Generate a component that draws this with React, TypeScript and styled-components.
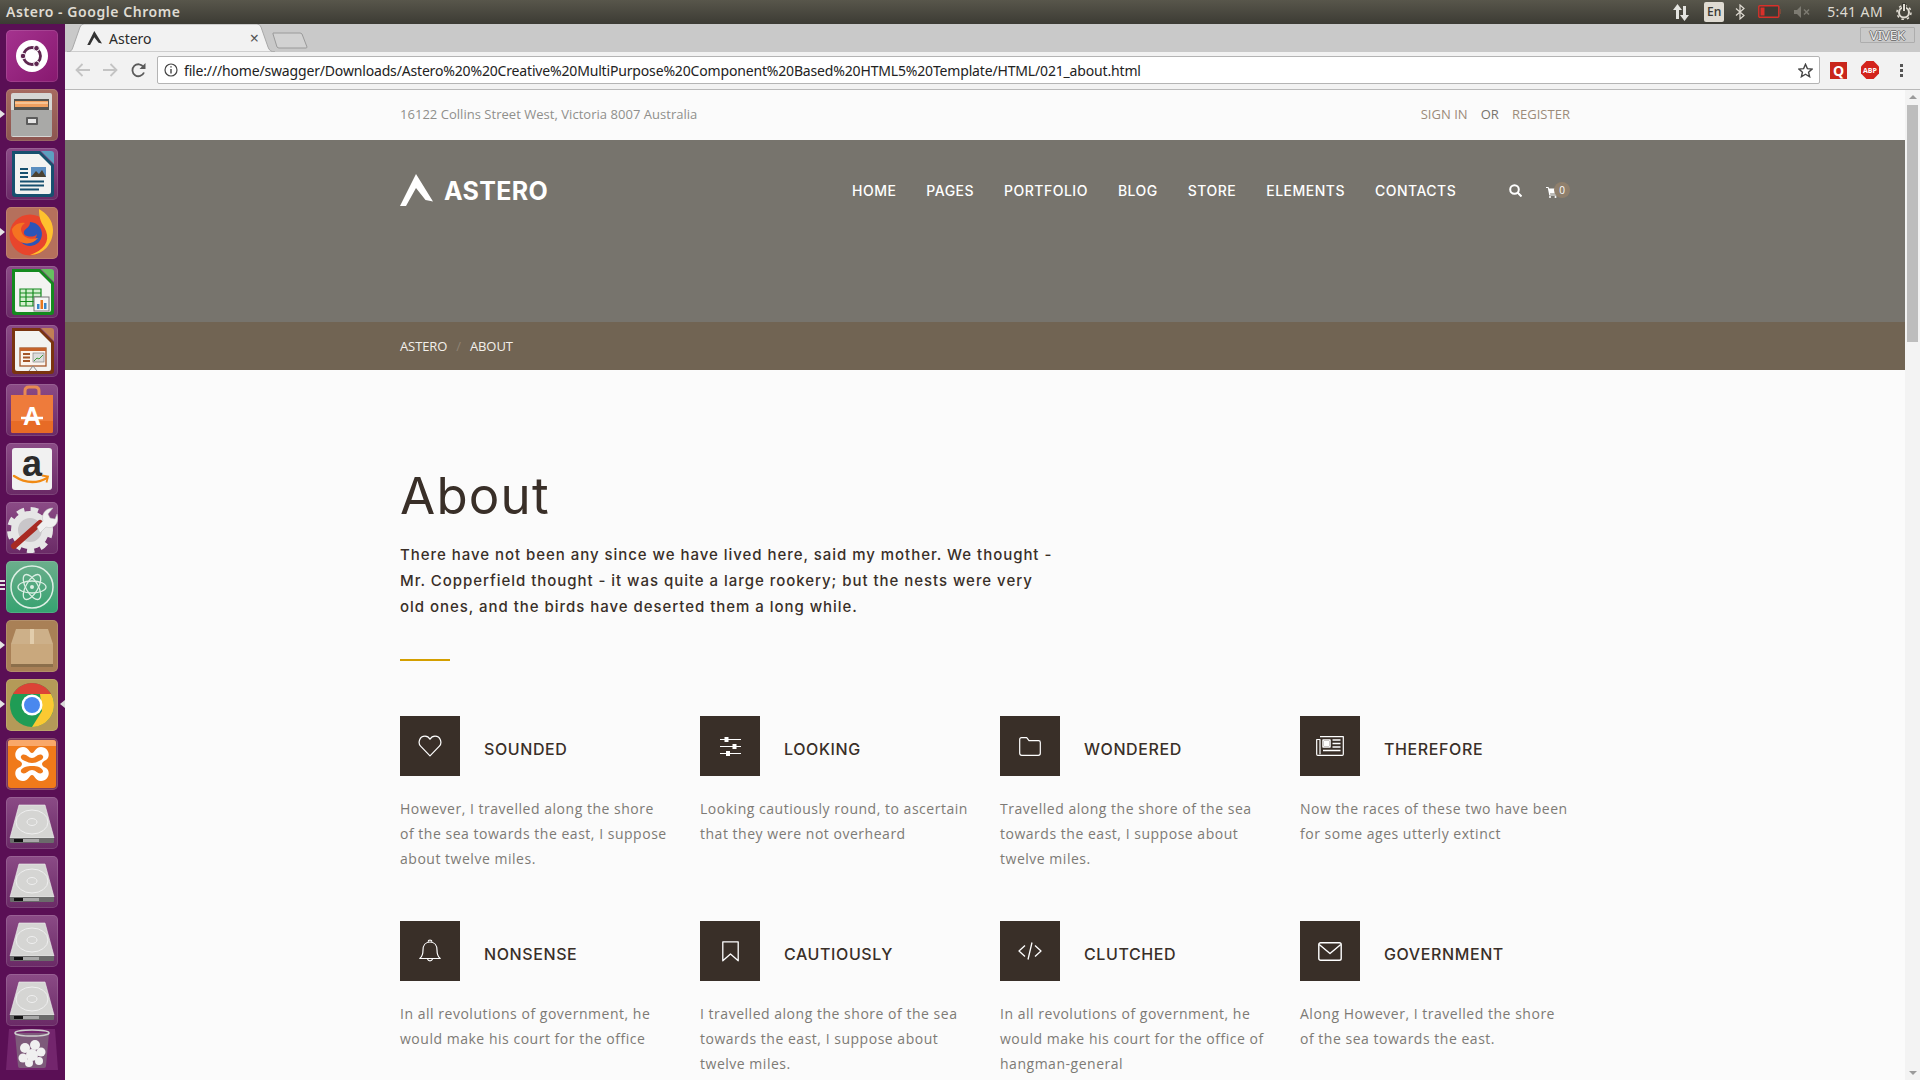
import React from "react";
import styled, { createGlobalStyle } from "styled-components";

const GlobalStyle = createGlobalStyle`
  html, body {
    margin: 0;
    padding: 0;
    width: 1920px;
    height: 1080px;
    overflow: hidden;
    background: #5a0f55;
  }
  * { box-sizing: border-box; }
`;

const Screen = styled.div`
  width: 1920px;
  height: 1080px;
  display: flex;
  flex-direction: column;
  overflow: hidden;
  font-family: "Open Sans", "Liberation Sans", sans-serif;
`;

/* ubuntu top panel */
const Panel = styled.div`
  height: 24px;
  flex: none;
  display: flex;
  align-items: center;
  justify-content: space-between;
  padding: 0 0 1px 6px;
  background: linear-gradient(#58564b, #3c3b34);
`;

const PanelTitle = styled.span`
  font-family: "Noto Sans", sans-serif;
  font-size: 14px;
  font-weight: 600;
  letter-spacing: 0.55px;
  color: #dfdbd2;
`;

const Tray = styled.div`
  display: flex;
  align-items: center;
  height: 24px;
  gap: 13px;
  padding-right: 8px;
`;

const LangBox = styled.span`
  width: 20px;
  height: 20px;
  margin: 0 -2px 0 2px;
  display: flex;
  align-items: center;
  justify-content: center;
  background: #dfdbd2;
  border-radius: 2px;
  color: #3c3b34;
  font-size: 12px;
  font-weight: 600;
`;

const Clock = styled.span`
  font-family: "Noto Sans", sans-serif;
  font-size: 14px;
  letter-spacing: 0.4px;
  color: #dfdbd2;
  margin-left: 2px;
`;

const Desk = styled.div`
  flex: 1;
  display: flex;
  min-height: 0;
`;

/* launcher */
const Launcher = styled.div`
  width: 65px;
  flex: none;
  display: flex;
  flex-direction: column;
  gap: 7px;
  padding: 6px 0 0 6px;
  background: #5a0f55;
  position: relative;
`;

const Tile = styled.div<{ $bg?: string }>`
  width: 52px;
  height: 52px;
  flex: none;
  position: relative;
  border-radius: 5px;
  background: ${(p) => p.$bg || "linear-gradient(#8b4b86, #6a2a66)"};
  box-shadow: inset 0 0 0 1px rgba(255, 255, 255, 0.12);

  svg {
    display: block;
  }
`;

const Pip = styled.span<{ $side?: "left" | "right" }>`
  position: absolute;
  top: 21px;
  ${(p) => (p.$side === "right" ? "right: -7px;" : "left: -6px;")}
  width: 0;
  height: 0;
  border-top: 4px solid transparent;
  border-bottom: 4px solid transparent;
  ${(p) =>
    p.$side === "right"
      ? "border-right: 5px solid #d9d9d9;"
      : "border-left: 5px solid #e4e4e4;"}
`;

const Pips = styled.span`
  position: absolute;
  top: 19px;
  left: -6px;
  width: 5px;
  height: 11px;
  background: repeating-linear-gradient(#e4e4e4 0 2px, transparent 2px 4px);
`;

const Browser = styled.div`
  flex: 1;
  display: flex;
  flex-direction: column;
  min-width: 0;
`;

const TabStrip = styled.div`
  height: 28px;
  flex: none;
  display: flex;
  align-items: flex-end;
  position: relative;
  background: #c9c9c9;
  padding-left: 2px;
`;

const Tab = styled.div`
  width: 208px;
  height: 28px;
  position: relative;
  display: flex;
  align-items: center;
  padding: 0 16px 0 20px;
  color: #2b2b2b;
  font-family: "Noto Sans", sans-serif;
  font-size: 14px;

  > svg {
    position: relative;
  }

  > svg:first-child {
    position: absolute;
    left: 0;
    top: 0;
  }
`;

const TabLabel = styled.span`
  position: relative;
  margin-left: 7px;
  flex: 1;
`;

const TabClose = styled.span`
  position: relative;
  font-size: 16px;
  color: #555;
`;

const NewTab = styled.div`
  margin: 0 0 3px -3px;
  height: 17px;
  svg {
    display: block;
  }
`;

const Profile = styled.span`
  position: absolute;
  right: 5px;
  top: 3px;
  width: 55px;
  height: 16px;
  display: flex;
  align-items: center;
  justify-content: center;
  border: 1px solid #adadad;
  border-radius: 1px;
  font-family: "Noto Sans", sans-serif;
  font-size: 13px;
  color: #ececec;
  text-shadow: 1px 0 0 #777, -1px 0 0 #777, 0 1px 0 #777, 0 -1px 0 #777;
`;

const Toolbar = styled.div`
  height: 38px;
  flex: none;
  display: flex;
  align-items: center;
  background: #f2f2f2;
  border-bottom: 1px solid #b9b9b9;
  padding: 0 0 1px 10px;
`;

const NavIcons = styled.div`
  display: flex;
  align-items: center;
  gap: 13px;
  width: 82px;
  flex: none;
`;

const Omnibox = styled.div`
  width: 1663px;
  height: 28px;
  flex: none;
  display: flex;
  align-items: center;
  gap: 6px;
  padding: 0 6px;
  background: #fff;
  border: 1px solid #b4b4b4;
  border-radius: 2px;
`;

const UrlText = styled.span`
  flex: 1;
  font-family: "Noto Sans", sans-serif;
  font-size: 14px;
  letter-spacing: -0.166px;
  color: #222;
  white-space: nowrap;
`;

const Extensions = styled.div`
  flex: 1;
  display: flex;
  align-items: center;
  gap: 14px;
  padding-left: 10px;
`;

const QBadge = styled.span`
  width: 17px;
  height: 17px;
  display: flex;
  align-items: center;
  justify-content: center;
  background: #c9261c;
  color: #fff;
  font-size: 14px;
  font-weight: 700;
`;

const AbpBadge = styled.span`
  width: 18px;
  height: 18px;
  display: flex;
  align-items: center;
  justify-content: center;
  background: #d3231c;
  color: #fff;
  font-size: 7px;
  font-weight: 700;
  clip-path: polygon(30% 0, 70% 0, 100% 30%, 100% 70%, 70% 100%, 30% 100%, 0 70%, 0 30%);
`;

const Dots = styled.span`
  margin-left: 7px;
  width: 3px;
  height: 13px;
  background: repeating-linear-gradient(#555 0 3px, transparent 3px 5px);
`;

const Viewport = styled.div`
  flex: 1;
  display: flex;
  min-height: 0;
`;

const Page = styled.div`
  flex: 1;
  min-width: 0;
  overflow: hidden;
  background: #fbfbfb;
`;

const Scrollbar = styled.div`
  width: 15px;
  flex: none;
  display: flex;
  flex-direction: column;
  align-items: center;
  background: #f3f3f3;
  padding-top: 5px;
`;

const ScrollArrow = styled.span<{ $down?: boolean }>`
  width: 0;
  height: 0;
  border-left: 4px solid transparent;
  border-right: 4px solid transparent;
  ${(p) =>
    p.$down
      ? "border-top: 4px solid #9b9b9b; margin-top: auto; margin-bottom: 5px;"
      : "border-bottom: 4px solid #9b9b9b;"}
`;

const ScrollThumb = styled.span`
  width: 11px;
  height: 237px;
  margin-top: 6px;
  background: #bdbdbd;
`;

const Wrap = styled.div`
  width: 1170px;
  margin: 0 auto;
`;

const InfoBar = styled.div`
  height: 50px;
  padding-bottom: 2px;
  background: #fbfbfb;
`;

const InfoInner = styled(Wrap)`
  height: 100%;
  display: flex;
  align-items: center;
  justify-content: space-between;
  font-size: 13px;
  letter-spacing: 0.03px;
  color: #8f8f8b;
`;

const Account = styled.div`
  display: flex;
  gap: 13px;
`;

const AccountLink = styled.span<{ $plain?: boolean }>`
  color: ${(p) => (p.$plain ? "#77746d" : "#9c8b7a")};
`;

const Hero = styled.div`
  height: 182px;
  background: #77746d;
`;

const HeroInner = styled(Wrap)`
  height: 100px;
  display: flex;
  align-items: center;
`;

const Logo = styled.div`
  display: flex;
  align-items: center;
  gap: 11px;
  width: 453px;
`;

const LogoText = styled.span`
  margin-top: 2px;
  font-family: Inter, "Liberation Sans", sans-serif;
  font-size: 25px;
  font-weight: 700;
  letter-spacing: 0.3px;
  color: #fff;
`;

const Nav = styled.nav`
  display: flex;
  gap: 30px;
  width: 657px;
  flex: none;
`;

const NavLink = styled.span`
  font-family: Inter, "Liberation Sans", sans-serif;
  font-size: 14px;
  font-weight: 500;
  letter-spacing: 0.49px;
  color: #fff;
`;

const HeroTools = styled.div`
  display: flex;
  align-items: center;
  gap: 24px;
`;

const CartWrap = styled.div`
  position: relative;
  width: 24px;
  height: 12px;
  margin-top: 4px;

  svg {
    display: block;
  }
`;

const CartBadge = styled.span`
  position: absolute;
  left: 8px;
  top: -4px;
  width: 16px;
  height: 16px;
  border-radius: 50%;
  display: flex;
  align-items: center;
  justify-content: center;
  background: #8f7f6c;
  color: #fff;
  font-size: 10px;
`;

const Crumbs = styled.div`
  height: 48px;
  background: #716453;
`;

const CrumbsInner = styled(Wrap)`
  height: 100%;
  display: flex;
  align-items: center;
  gap: 9px;
  font-size: 13px;
  letter-spacing: -0.1px;
  color: #f3f0ec;
`;

const CrumbSep = styled.span`
  color: #8f8373;
`;

const Main = styled(Wrap)`
  padding-top: 96px;
`;

const Title = styled.h1`
  margin: 0;
  font-family: Inter, "Liberation Sans", sans-serif;
  font-size: 51px;
  font-weight: 400;
  line-height: 60px;
  letter-spacing: 1.2px;
  color: #392f28;
`;

const Lead = styled.p`
  margin: 16px 0 0;
  width: 660px;
  font-family: Inter, "Liberation Sans", sans-serif;
  font-size: 15px;
  font-weight: 500;
  line-height: 26px;
  letter-spacing: 0.96px;
  color: #392f28;
`;

const Rule = styled.div`
  width: 50px;
  height: 2px;
  margin-top: 39px;
  background: #d49f00;
`;

const Features = styled.div`
  display: grid;
  grid-template-columns: repeat(4, 300px);
  grid-auto-rows: 205px;
  margin-top: 55px;
`;

const Feature = styled.div`
  width: 270px;
`;

const FeatureHead = styled.div`
  display: flex;
  align-items: center;
  gap: 24px;
`;

const IconBox = styled.div`
  width: 60px;
  height: 60px;
  flex: none;
  display: flex;
  align-items: center;
  justify-content: center;
  background: #392f28;
`;

const FeatureTitle = styled.h3`
  margin: 6px 0 0;
  font-family: Inter, "Liberation Sans", sans-serif;
  font-size: 16px;
  font-weight: 500;
  letter-spacing: 0.6px;
  color: #392f28;
`;

const FeatureText = styled.p`
  margin: 20px 0 0;
  font-size: 14px;
  line-height: 25px;
  letter-spacing: 0.52px;
  color: #7d7a75;
`;

/* feature line icons */
const LineIcon = ({ w, h, children }: { w: number; h: number; children: React.ReactNode }) => (
  <svg width={w} height={h} viewBox={`0 0 ${w} ${h}`} fill="none" stroke="#fff" strokeWidth="1.2" strokeLinejoin="round">
    {children}
  </svg>
);

const features = [
  {
    title: "SOUNDED",
    text: "However, I travelled along the shore of the sea towards the east, I suppose about twelve miles.",
    icon: (
      <LineIcon w={24} h={22}>
        <path d="M12 20.8 2.6 11.2C-.4 8 1.400 1.200 7 1.200c2.300 0 4 1.300 5 3.100 1-1.800 2.700-3.100 5-3.100 5.600 0 7.400 6.800 4.400 10z" />
      </LineIcon>
    ),
  },
  {
    title: "LOOKING",
    text: "Looking cautiously round, to ascertain that they were not overheard",
    icon: (
      <LineIcon w={21} h={19}>
        <path d="M0 2.500h21M0 9.500h21M0 16.500h21" />
        <path d="M4.500 0h4v5h-4zM12.500 7h4v5h-4zM6 14h4v5H6z" fill="#fff" stroke="none" />
      </LineIcon>
    ),
  },
  {
    title: "WONDERED",
    text: "Travelled along the shore of the sea towards the east, I suppose about twelve miles.",
    icon: (
      <LineIcon w={22} h={19}>
        <path d="M.7 2.500Q.7.700 2.500.700h5.200l2.300 3h9.500q1.800 0 1.800 1.800v10.800q0 2-2 2H2.700q-2 0-2-2z" />
      </LineIcon>
    ),
  },
  {
    title: "THEREFORE",
    text: "Now the races of these two have been for some ages utterly extinct",
    icon: (
      <LineIcon w={28} h={20}>
        <path d="M4 .700h23.300v17.500q0 1.100-1.100 1.100H1.800Q.7 19.300.7 18.200V3.500H4v14.800" />
        <path d="M7 4h7v7H7zM16.500 4h8M16.500 7.500h8M16.500 11h8M7 14.500h17.500" strokeWidth="1.500" />
        <path d="M8 5h5v5H8z" fill="#fff" stroke="none" />
      </LineIcon>
    ),
  },
  {
    title: "NONSENSE",
    text: "In all revolutions of government, he would make his court for the office",
    icon: (
      <LineIcon w={22} h={24}>
        <path d="M.8 19.500c2.500-2 3.200-4.500 3.200-8.500 0-4.500 2.500-8 7-8s7 3.500 7 8c0 4 .7 6.500 3.200 8.500z" />
        <path d="M9.200 2.800a1.800 1.800 0 0 1 3.600 0M8.500 19.800a2.600 2.800 0 0 0 5 0" />
      </LineIcon>
    ),
  },
  {
    title: "CAUTIOUSLY",
    text: "I travelled along the shore of the sea towards the east, I suppose about twelve miles.",
    icon: (
      <LineIcon w={17} h={21}>
        <path d="M.8.800h15.400v19L8.500 13 .8 19.800z" strokeWidth="1.300" />
      </LineIcon>
    ),
  },
  {
    title: "CLUTCHED",
    text: "In all revolutions of government, he would make his court for the office of hangman-general",
    icon: (
      <LineIcon w={24} h={18}>
        <path d="M7 3.500 1 9l6 5.500M17 3.500 23 9l-6 5.500M14 .5 10 17.500" strokeWidth="1.300" />
      </LineIcon>
    ),
  },
  {
    title: "GOVERNMENT",
    text: "Along However, I travelled the shore of the sea towards the east.",
    icon: (
      <LineIcon w={24} h={19}>
        <rect x=".8" y=".8" width="22.400" height="17.400" rx="1.800" strokeWidth="1.400" />
        <path d="M1.200 2.500 12 11.500 22.800 2.500" strokeWidth="1.400" />
      </LineIcon>
    ),
  },
];

/* launcher artwork, all drawn on a 52 x 52 tile */
const Art = ({ children }: { children: React.ReactNode }) => (
  <svg width="52" height="52" viewBox="0 0 52 52">
    {children}
  </svg>
);

const UbuntuArt = () => (
  <Art>
    <circle cx="26" cy="26" r="16" fill="#fff" />
    <circle cx="26" cy="26" r="8.500" fill="none" stroke="#5e2750" strokeWidth="2.800" />
    <circle cx="17" cy="26" r="2.800" fill="#5e2750" stroke="#fff" strokeWidth="1" />
    <circle cx="30.500" cy="18.200" r="2.800" fill="#5e2750" stroke="#fff" strokeWidth="1" />
    <circle cx="30.500" cy="33.800" r="2.800" fill="#5e2750" stroke="#fff" strokeWidth="1" />
  </Art>
);

const FilesArt = () => (
  <Art>
    <rect x="5" y="4" width="41" height="44" rx="2" fill="#d6d6d4" />
    <rect x="8" y="10" width="35" height="12" fill="#55534f" />
    <rect x="9" y="12" width="33" height="6" fill="#f0a060" />
    <path d="M9 14h33" stroke="#fce6c8" strokeWidth="1.200" />
    <rect x="5" y="21" width="41" height="26" fill="#a9a9a7" />
    <rect x="20" y="28" width="12" height="8" rx="1" fill="#5c5c5c" />
    <rect x="22" y="30" width="8" height="4" fill="#e4e4e4" />
  </Art>
);

const DocArt = ({ edge, corner, children }: { edge: string; corner: string; children: React.ReactNode }) => (
  <Art>
    <path d="M6 3h28l14 14v29a3 3 0 0 1-3 3H9a3 3 0 0 1-3-3z" fill={edge} />
    <path d="M35 3h10q3 0 3 3v10z" fill={corner} />
    <path d="M9 6h24l12 12v26q0 2-2 2H11q-2 0-2-2z" fill="#f3f3f1" />
    {children}
  </Art>
);

const WriterArt = () => (
  <DocArt edge="#17506f" corner="#5d9fc0">
    <path d="M14 21h8M14 25h8M14 29h8M14 33.500h24M14 37.500h24M14 41.500h19" stroke="#17506f" strokeWidth="1.800" />
    <rect x="25" y="19" width="15" height="10" fill="#5b8ec0" />
    <path d="M25 29l5-6 3 3 3-4 4 7z" fill="#4b4130" />
  </DocArt>
);

const CalcArt = () => (
  <DocArt edge="#148a1e" corner="#66c060">
    <path d="M14 23h21v17H14zM14 27h21M14 31h21M14 35.500h21M20 23v17M27 23v17" fill="#d4efcf" stroke="#148a1e" strokeWidth="1.200" />
    <rect x="28" y="31" width="15" height="14" fill="#f5f5f5" stroke="#777" />
    <path d="M31 43v-5h2.500v5z" fill="#3a87c8" />
    <path d="M34.500 43v-9H37v9z" fill="#e8771d" />
    <path d="M38 43v-6h2.500v6z" fill="#3a87c8" />
  </DocArt>
);

const ImpressArt = () => (
  <DocArt edge="#7a3410" corner="#c08055">
    <rect x="14" y="23" width="26" height="18" fill="#fbf4ee" stroke="#a3562a" strokeWidth="1.300" />
    <path d="M14 23h26v3H14z" fill="#c4622b" />
    <path d="M17 29h7M17 32.500h7M17 36h7" stroke="#a3562a" strokeWidth="2" />
    <rect x="27" y="28" width="11" height="9" fill="#ddd" stroke="#777" strokeWidth=".6" />
    <path d="M28 36l3-3 2 1 4-4" fill="none" stroke="#3f9a3a" />
    <path d="M27 41l-4 5M27 41l4 5" stroke="#888" />
  </DocArt>
);

const StoreText = styled.text`
  font-family: "Liberation Sans", sans-serif;
  font-weight: 700;
  font-size: 25px;
`;

const StoreArt = () => (
  <Art>
    <path d="M19 12V7q0-4 4-4h6q4 0 4 4v5" fill="none" stroke="#e78a52" strokeWidth="3" />
    <path d="M5 11h42v36q0 2-2 2H7q-2 0-2-2z" fill="#ee7b3b" />
    <path d="M5 37h42v10q0 2-2 2H7q-2 0-2-2z" fill="#e76b26" />
    <StoreText x="26" y="41" textAnchor="middle" fill="#fff">A</StoreText>
    <path d="M15 34h22" stroke="#fff" strokeWidth="2.500" />
  </Art>
);

const AmazonLetter = styled.text`
  font-family: "Liberation Sans", sans-serif;
  font-weight: 700;
  font-size: 36px;
`;

const AmazonArt = () => (
  <Art>
    <rect x="6" y="5" width="40" height="42" rx="3" fill="#f1f1f1" />
    <AmazonLetter x="26" y="33" textAnchor="middle" fill="#2b2b2b">a</AmazonLetter>
    <path d="M8 33q17 11 33 2" fill="none" stroke="#f08a14" strokeWidth="2.400" strokeLinecap="round" />
    <path d="M36 32.500l6 1-1.500 6" fill="none" stroke="#f08a14" strokeWidth="1.800" />
  </Art>
);

const ToolsArt = () => (
  <Art>
    <circle cx="24" cy="28" r="15.500" fill="#c9c6c9" stroke="#e6e6e6" strokeWidth="7" />
    <circle cx="24" cy="28" r="20.500" fill="none" stroke="#e6e6e6" strokeWidth="5" strokeDasharray="7.500 6.300" />
    <path d="M8 44 34 21" stroke="#a82a22" strokeWidth="6" strokeLinecap="round" />
    <path d="M31 25l6-6c-2-6 2-13 10-13l-5 6 2 4 5 1 2-5c3 8-3 16-11 13l-6 6z" fill="#f0f0f0" stroke="#bbb" strokeWidth=".5" />
  </Art>
);

const AtomArt = () => (
  <Art>
    <circle cx="26" cy="26" r="21" fill="none" stroke="#dcefe4" strokeWidth="1.500" />
    <g fill="none" stroke="#dcefe4" strokeWidth="1.300">
      <ellipse cx="26" cy="26" rx="14" ry="6" />
      <ellipse cx="26" cy="26" rx="14" ry="6" transform="rotate(60 26 26)" />
      <ellipse cx="26" cy="26" rx="14" ry="6" transform="rotate(120 26 26)" />
    </g>
    <circle cx="26" cy="26" r="2" fill="#dcefe4" />
  </Art>
);

const PackageArt = () => (
  <Art>
    <path d="M10 9h32l5 15v23H5V24z" fill="#cdb089" />
    <path d="M5 24h42v21q0 2-2 2H7q-2 0-2-2z" fill="#c9a87d" />
    <rect x="24" y="9" width="4" height="15" fill="#e2cdac" />
    <path d="M5 44h42v3H5z" fill="#8c6f4b" />
  </Art>
);

const ChromeArt = () => (
  <Art>
    <circle cx="26" cy="26" r="22" fill="#1f9c55" />
    <path d="M7 15a22 22 0 0 1 38 0L26 15z" fill="#dc4336" />
    <path d="M45 15a22 22 0 0 1-19 33L36 32l-2-17z" fill="#fbc932" />
    <circle cx="26" cy="26" r="10.500" fill="#fff" />
    <circle cx="26" cy="26" r="8" fill="#4a88ee" />
  </Art>
);

const FirefoxArt = () => (
  <Art>
    <circle cx="24" cy="28" r="20.500" fill="#e8452c" />
    <path d="M33 2c7 4 14 11 14 21 0 13-9 25-23 25 14-5 20-13 16-24-2-6-7-8-7-22z" fill="#ffc12e" />
    <path d="M24 15a12 12 0 1 1-9 20c6 3 15 0 16-8-2 3-7 3-10 2-4-1-4-5-1-7 2-2 4-3 4-7z" fill="#2c55b8" />
    <path d="M6 22c3-5 8-7 13-6-4 3-5 6-3 10 2 5 9 7 16 5-4 6-13 7-19 3-4-3-7-7-7-12z" fill="#f57321" />
  </Art>
);

const XamppArt = () => (
  <Art>
    <rect x="2" y="2" width="48" height="48" rx="3" fill="#f07a1a" />
    <path d="M2 5q0-3 3-3h42q3 0 3 3v3H2z" fill="#f9a869" />
    <path d="M17 9c6 0 6 6 9 6s3-6 9-6c8 0 10 10 5 13-2 1-4 2-4 4s2 3 4 4c5 3 3 13-5 13-6 0-6-6-9-6s-3 6-9 6c-8 0-10-10-5-13 2-1 4-2 4-4s-2-3-4-4C7 19 9 9 17 9z" fill="#fff" />
    <path d="M16 17c4-2 6 3 10 3s6-5 10-3c3 2 0 5-3 6-2 1-4 2-7 2s-4-1-7-2c-3-1-6-4-3-6zM16 35c-3-2 0-5 3-6s4-1 7-1 5 0 7 1 6 4 3 6c-4 2-6-3-10-3s-6 5-10 3z" fill="#f07a1a" />
  </Art>
);

const DiskArt = () => (
  <Art>
    <path d="M13 8h26l9 33H4z" fill="#d5d5d3" stroke="#f1f1f1" strokeWidth=".6" />
    <ellipse cx="26" cy="25" rx="16" ry="12" fill="none" stroke="#efefef" strokeWidth="1" />
    <ellipse cx="26" cy="25" rx="5" ry="3.500" fill="none" stroke="#efefef" strokeWidth="1" />
    <path d="M4 41h44v4q0 1-1 1H5q-1 0-1-1z" fill="#6b6b6b" />
    <path d="M8 42h9v3H8z" fill="#111" />
    <path d="M17 42h16v3H17z" fill="#a8a8a8" />
  </Art>
);

const TrashArt = () => (
  <svg width="52" height="44" viewBox="0 0 52 44">
    <path d="M3 1h46l3 41H0z" fill="#7d2f78" opacity=".7" />
    <path d="M9 5h34l-3 33q0 2-2 2H14q-2 0-2-2z" fill="#7d5a7a" />
    <ellipse cx="26" cy="5" rx="17" ry="3" fill="none" stroke="#cfcfcf" strokeWidth="1.500" />
    <g fill="#f0f0f0">
      <circle cx="19" cy="20" r="5" />
      <circle cx="29" cy="17" r="5" />
      <circle cx="35" cy="24" r="4.500" />
      <circle cx="17" cy="30" r="4.500" />
      <circle cx="26" cy="27" r="6" />
      <circle cx="33" cy="33" r="4" />
      <circle cx="23" cy="35" r="4" />
    </g>
  </svg>
);

const launcherItems: { art: React.ReactNode; bg?: string; pip?: "one" | "both" | "many" }[] = [
  { art: <UbuntuArt />, bg: "linear-gradient(135deg, #a5338f, #87186f)" },
  { art: <FilesArt />, bg: "linear-gradient(#a66a60, #8c5550)", pip: "one" },
  { art: <WriterArt /> },
  { art: <FirefoxArt />, bg: "#b5705c", pip: "one" },
  { art: <CalcArt /> },
  { art: <ImpressArt /> },
  { art: <StoreArt /> },
  { art: <AmazonArt /> },
  { art: <ToolsArt /> },
  { art: <AtomArt />, bg: "linear-gradient(#6cae8c, #35a270)", pip: "many" },
  { art: <PackageArt />, bg: "#a98056", pip: "one" },
  { art: <ChromeArt />, bg: "#b49a58", pip: "both" },
  { art: <XamppArt />, bg: "#7a3a5e" },
  { art: <DiskArt /> },
  { art: <DiskArt /> },
  { art: <DiskArt /> },
  { art: <DiskArt /> },
];

const TrashTile = styled(Tile)`
  height: 44px;
  margin-top: -5px;
  background: none;
  box-shadow: none;
`;

const navItems = ["HOME", "PAGES", "PORTFOLIO", "BLOG", "STORE", "ELEMENTS", "CONTACTS"];

const LogoMark = ({ size, color }: { size: number; color: string }) => (
  <svg width={size} height={size * 0.97} viewBox="0 0 33 32">
    <path d="M16 0 33 27.500 25.500 26 16 14 6 32H0z" fill={color} />
  </svg>
);

export default function App() {
  return (
    <Screen>
      <GlobalStyle />
      <Panel>
        <PanelTitle>Astero - Google Chrome</PanelTitle>
        <Tray>
          <svg width="16" height="20" viewBox="0 0 16 20" fill="#e4e4e0">
            <path d="M4.500 2 9 8H6v9H3V8H0zM11.500 19 7 13h3V4h3v9h3z" />
          </svg>
          <LangBox>En</LangBox>
          <svg width="10" height="16" viewBox="0 0 10 16" fill="none" stroke="#dfdbd2" strokeWidth="1.200">
            <path d="M1 4.500 9 11.500 5 15V1l4 3.500L1 11.500" />
          </svg>
          <svg width="23" height="13" viewBox="0 0 23 13">
            <rect x=".8" y=".8" width="20" height="11.400" rx="1" fill="#3c3b34" stroke="#d8302a" strokeWidth="1.400" />
            <rect x="2.500" y="2.500" width="4" height="8" fill="#d8302a" />
            <rect x="21.500" y="4" width="1.500" height="5" fill="#7a4a3a" />
          </svg>
          <svg width="18" height="12" viewBox="0 0 18 12" fill="#7d7b72">
            <path d="M0 4h3l4-4v12L3 8H0z" />
            <path d="M10 3.500 15 8.500M15 3.500 10 8.500" stroke="#7d7b72" strokeWidth="1.500" />
          </svg>
          <Clock>5:41 AM</Clock>
          <svg width="16" height="17" viewBox="0 0 16 17" fill="none" stroke="#dfdbd2" strokeWidth="2">
            <circle cx="8" cy="9.500" r="5" />
            <circle cx="8" cy="9.500" r="7" strokeWidth="1.500" strokeDasharray="2.500 3" />
            <path d="M8 0v8" stroke="#3c3b34" strokeWidth="4" />
            <path d="M8 1v7" />
          </svg>
        </Tray>
      </Panel>
      <Desk>
        <Launcher>
          {launcherItems.map((item, i) => (
            <Tile key={i} $bg={item.bg}>
              {item.pip === "many" ? <Pips /> : item.pip ? <Pip /> : null}
              {item.pip === "both" && <Pip $side="right" />}
              {item.art}
            </Tile>
          ))}
          <TrashTile>
            <TrashArt />
          </TrashTile>
        </Launcher>
        <Browser>
          <TabStrip>
            <Tab>
              <svg width="208" height="28" viewBox="0 0 208 28">
                <path d="M0 28c4 0 5-2 6-5L13 3q1-3 4-3h173q3 0 4 3l7 20c1 3 3 5 7 5z" fill="#f2f2f2" stroke="#a8a8a8" />
              </svg>
              <LogoMark size={15} color="#333" />
              <TabLabel>Astero</TabLabel>
              <TabClose>×</TabClose>
            </Tab>
            <NewTab>
              <svg width="36" height="17" viewBox="0 0 36 17">
                <path d="M1 1h27q1 0 2 1l5 13q0 1-1 1H7q-1 0-2-1L1 2z" fill="#d2d2d2" stroke="#9a9a9a" />
              </svg>
            </NewTab>
            <Profile>VIVEK</Profile>
          </TabStrip>
          <Toolbar>
            <NavIcons>
              <svg width="15" height="14" viewBox="0 0 15 14" fill="none" stroke="#c4c4c4" strokeWidth="1.800">
                <path d="M15 7H2M7.500 1 1.500 7l6 6" />
              </svg>
              <svg width="15" height="14" viewBox="0 0 15 14" fill="none" stroke="#c4c4c4" strokeWidth="1.800">
                <path d="M0 7h13M7.500 1l6 6-6 6" />
              </svg>
              <svg width="15" height="15" viewBox="0 0 15 15" fill="none" stroke="#5a5a5a" strokeWidth="1.800">
                <path d="M13 9.500A6 6 0 1 1 12.500 4" />
                <path d="M14.500 0v6h-6z" fill="#5a5a5a" stroke="none" />
              </svg>
            </NavIcons>
            <Omnibox>
              <svg width="14" height="14" viewBox="0 0 14 14" fill="none" stroke="#444" strokeWidth="1.200">
                <circle cx="7" cy="7" r="6" />
                <path d="M7 6v4.500M7 3.200v1.400" strokeWidth="1.400" />
              </svg>
              <UrlText>file:///home/swagger/Downloads/Astero%20%20Creative%20MultiPurpose%20Component%20Based%20HTML5%20Template/HTML/021_about.html</UrlText>
              <svg width="15" height="15" viewBox="0 0 24 24" fill="none" stroke="#444" strokeWidth="2.200">
                <path d="m12 2 3 7 7.500.7-5.600 5 1.700 7.300L12 18l-6.600 4 1.700-7.300-5.600-5L9 9z" />
              </svg>
            </Omnibox>
            <Extensions>
              <QBadge>Q</QBadge>
              <AbpBadge>ABP</AbpBadge>
              <Dots />
            </Extensions>
          </Toolbar>
          <Viewport>
            <Page>
              <InfoBar>
                <InfoInner>
                  <span>16122 Collins Street West, Victoria 8007 Australia</span>
                  <Account>
                    <AccountLink>SIGN IN</AccountLink>
                    <AccountLink $plain>OR</AccountLink>
                    <AccountLink>REGISTER</AccountLink>
                  </Account>
                </InfoInner>
              </InfoBar>
              <Hero>
                <HeroInner>
                  <Logo>
                    <LogoMark size={33} color="#fff" />
                    <LogoText>ASTERO</LogoText>
                  </Logo>
                  <Nav>
                    {navItems.map((n) => (
                      <NavLink key={n}>{n}</NavLink>
                    ))}
                  </Nav>
                  <HeroTools>
                    <svg width="13" height="13" viewBox="0 0 13 13" fill="none" stroke="#fff" strokeWidth="2">
                      <circle cx="5.500" cy="5.500" r="4.300" />
                      <path d="m8.500 8.500 4 4" />
                    </svg>
                    <CartWrap>
                      <svg width="12" height="12" viewBox="0 0 12 12" fill="#fff">
                        <path d="M0 1h2.500l.5 1.500H12L10.500 7.500H4l.3 1h6.700v1H3.300L1.800 2H0z" />
                        <circle cx="4" cy="11" r="1" />
                        <circle cx="9.500" cy="11" r="1" />
                      </svg>
                      <CartBadge>0</CartBadge>
                    </CartWrap>
                  </HeroTools>
                </HeroInner>
              </Hero>
              <Crumbs>
                <CrumbsInner>
                  <span>ASTERO</span>
                  <CrumbSep>/</CrumbSep>
                  <span>ABOUT</span>
                </CrumbsInner>
              </Crumbs>
              <Main>
                <Title>About</Title>
                <Lead>
                  There have not been any since we have lived here, said my mother. We thought - Mr. Copperfield thought - it was quite a large rookery; but the nests were very old ones, and the birds have deserted them a long while.
                </Lead>
                <Rule />
                <Features>
                  {features.map((f) => (
                    <Feature key={f.title}>
                      <FeatureHead>
                        <IconBox>{f.icon}</IconBox>
                        <FeatureTitle>{f.title}</FeatureTitle>
                      </FeatureHead>
                      <FeatureText>{f.text}</FeatureText>
                    </Feature>
                  ))}
                </Features>
              </Main>
            </Page>
            <Scrollbar>
              <ScrollArrow />
              <ScrollThumb />
              <ScrollArrow $down />
            </Scrollbar>
          </Viewport>
        </Browser>
      </Desk>
    </Screen>
  );
}
